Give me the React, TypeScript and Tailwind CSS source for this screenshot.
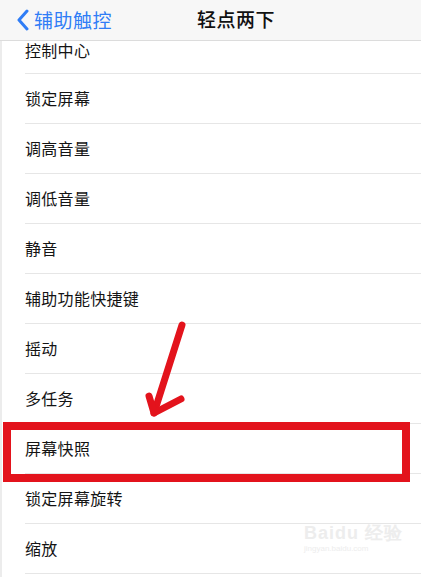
import React from "react";

const items = [
  "锁定屏幕",
  "调高音量",
  "调低音量",
  "静音",
  "辅助功能快捷键",
  "摇动",
  "多任务",
  "屏幕快照",
  "锁定屏幕旋转",
  "缩放",
];

export default function App() {
  return (
    <div
      className="relative w-[421px] h-[577px] overflow-hidden bg-white"
      style={{ fontFamily: '"Noto Sans CJK SC", "Noto Sans", sans-serif' }}
    >
      <div className="h-[41px] bg-[#f7f7f7] border-b border-[#dcdcdc] flex items-center relative">
        <div className="flex items-center pl-[16px] text-[#2f7df6]">
          <svg width="14" height="22" viewBox="0 0 14 22" className="mr-[4px]">
            <path d="M11 2 L3 11 L11 20" fill="none" stroke="#2f7df6" strokeWidth="3" strokeLinecap="round" strokeLinejoin="round" />
          </svg>
          <span className="text-[19px] leading-[24px] tracking-[0.5px]">辅助触控</span>
        </div>
        <div className="absolute left-[197px] top-[7px] text-[19px] leading-[24px] font-medium text-[#111] tracking-[0.5px]">
          轻点两下
        </div>
      </div>
      <div className="border-l-2 border-[#ececec]">
        <div className="h-[32px] pl-[23px] flex items-end pb-[13px]">
          <span className="text-[16px] leading-[20px] text-[#141414] tracking-[0.3px]">控制中心</span>
        </div>
        {items.map((t) => (
          <div key={t} className="ml-[23px] border-t border-[#e6e6e6] h-[50px] flex items-center pb-[1px]">
            <span className="text-[16px] leading-[20px] text-[#141414] tracking-[0.3px]">{t}</span>
          </div>
        ))}
        <div className="ml-[23px] border-t border-[#e6e6e6] h-[10px]" />
      </div>

      {/* red highlight box */}
      <div className="absolute left-[3px] top-[422px] w-[407px] h-[60px] border-[8px] border-[#e3131c]" />

      {/* arrow */}
      <svg className="absolute left-0 top-0" width="421" height="577" viewBox="0 0 421 577">
        <g stroke="#e3131c" strokeWidth="7" strokeLinecap="round" strokeLinejoin="round" fill="none">
          <path d="M182 325 L154 413" />
          <path d="M149 396 L154 413 L181 399" />
        </g>
      </svg>

      {/* watermark */}
      <div className="absolute left-[304px] top-[524px] text-[#ededed] leading-none select-none">
        <div className="text-[18px] font-bold tracking-[1px]" style={{ fontFamily: '"Liberation Sans", sans-serif' }}>
          Baidu 经验
        </div>
        <div className="text-[8px] mt-[3px]" style={{ fontFamily: '"Liberation Sans", sans-serif' }}>
          jingyan.baidu.com
        </div>
      </div>
    </div>
  );
}
